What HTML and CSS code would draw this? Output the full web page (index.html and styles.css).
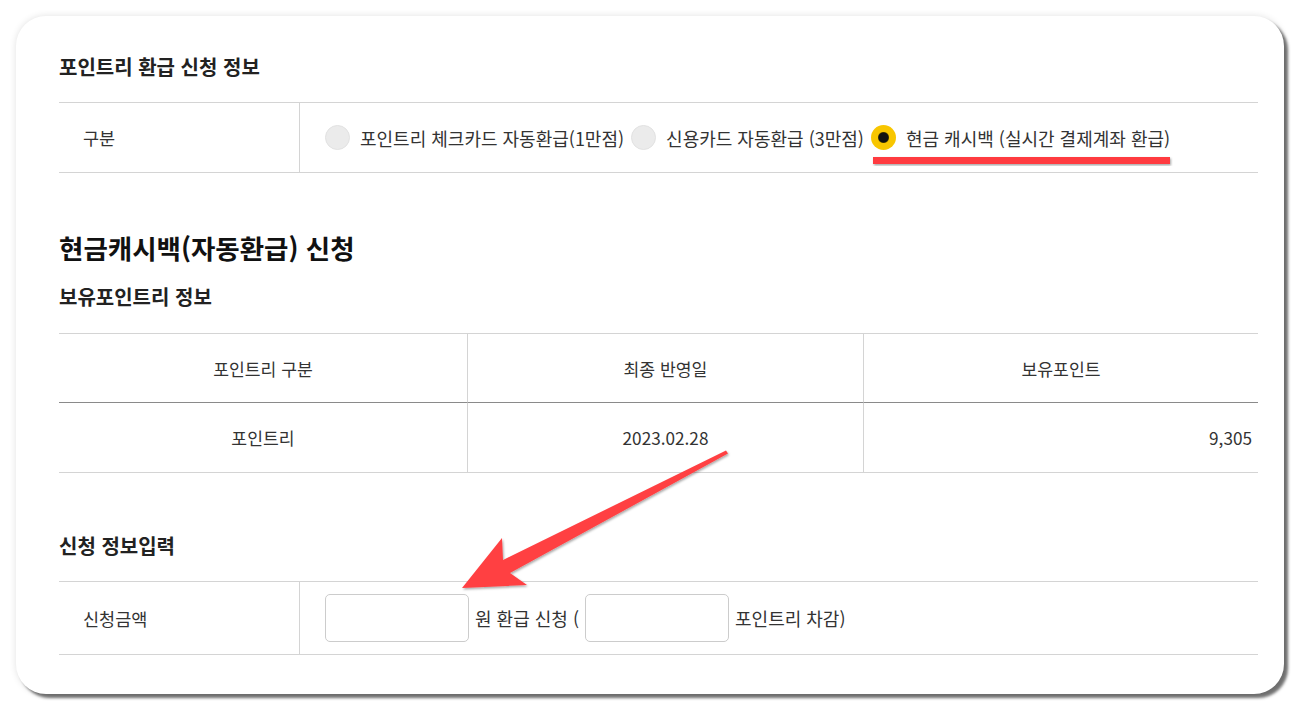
FILE: index.html
```html
<!DOCTYPE html>
<html lang="ko">
<head>
<meta charset="utf-8">
<title>포인트리 환급 신청</title>
<link rel="stylesheet" href="styles.css">
</head>
<body>
<div class="page">
  <section class="card">
    <h3 class="sub-title first">포인트리 환급 신청 정보</h3>
    <div class="form-table">
      <div class="form-row">
        <div class="label">구분</div>
        <div class="value options">
          <label class="opt"><span class="radio"></span><span class="opt-text">포인트리 체크카드 자동환급(1만점)</span></label>
          <label class="opt"><span class="radio"></span><span class="opt-text">신용카드 자동환급 (3만점)</span></label>
          <label class="opt"><span class="radio checked"></span><span class="opt-text">현금 캐시백 (실시간 결제계좌 환급)</span></label>
        </div>
      </div>
    </div>

    <h2 class="main-title">현금캐시백(자동환급) 신청</h2>
    <h3 class="sub-title sec">보유포인트리 정보</h3>
    <div class="data-table">
      <div class="th">포인트리 구분</div>
      <div class="th">최종 반영일</div>
      <div class="th">보유포인트</div>
      <div class="td">포인트리</div>
      <div class="td">2023.02.28</div>
      <div class="td right">9,305</div>
    </div>

    <h3 class="sub-title input-title">신청 정보입력</h3>
    <div class="form-table">
      <div class="form-row tall">
        <div class="label">신청금액</div>
        <div class="value inputs">
          <span class="box"></span>
          <span class="inline-text">원 환급 신청 (</span>
          <span class="box"></span>
          <span class="inline-text">포인트리 차감)</span>
        </div>
      </div>
    </div>
  </section>

  <svg class="annot" width="1308" height="718" viewBox="0 0 1308 718" aria-hidden="true">
    <defs>
      <filter id="sh" x="-10%" y="-10%" width="130%" height="130%">
        <feDropShadow dx="1" dy="1.5" stdDeviation="1" flood-color="#000" flood-opacity="0.35"/>
      </filter>
    </defs>
    <rect x="873" y="157" width="297" height="7" fill="#ff3b40" filter="url(#sh)"/>
    <polygon points="462,588 502,538 503,560 726,450.5 728,453.5 510,573 527,585" fill="#ff4043" filter="url(#sh)"/>
  </svg>
</div>
</body>
</html>
```
FILE: styles.css
```css
html, body {
  margin: 0;
  padding: 0;
  background: #ffffff;
}

body {
  font-family: "Noto Sans CJK KR", "Noto Sans", sans-serif;
  color: #333333;
}

.page {
  position: relative;
  width: 1308px;
  height: 718px;
  overflow: hidden;
}

.card {
  box-sizing: border-box;
  margin: 16px 0 0 16px;
  width: 1268px;
  height: 678px;
  padding: 36px 26px 0 43px;
  background: #ffffff;
  border-radius: 30px;
  box-shadow: 4px 4px 3px rgba(0, 0, 0, 0.55), 0 0 7px rgba(0, 0, 0, 0.12);
}

.sub-title {
  margin: 0;
  height: 30px;
  line-height: 30px;
  font-size: 20px;
  font-weight: 700;
  color: #222222;
}

.sub-title.first {
  margin-bottom: 20px;
}

.main-title {
  margin: 57px 0 0 0;
  height: 36px;
  line-height: 36px;
  font-size: 26.5px;
  font-weight: 700;
  color: #111111;
}

.sub-title.sec {
  margin-top: 16px;
  margin-bottom: 21px;
}

.sub-title.input-title {
  margin-top: 58px;
  margin-bottom: 20px;
}

.form-table {
  border-top: 1px solid #d4d4d4;
  border-bottom: 1px solid #d4d4d4;
}

.form-row {
  display: grid;
  grid-template-columns: 240px 1fr;
  height: 69px;
}

.form-row.tall {
  height: 72px;
}

.label {
  display: flex;
  align-items: center;
  padding-left: 24px;
  font-size: 17.5px;
  color: #333333;
}

.value {
  border-left: 1px solid #d4d4d4;
  display: flex;
  align-items: center;
  padding-left: 25px;
}

.options {
  gap: 7px;
}

.opt {
  display: flex;
  align-items: center;
  gap: 10px;
  font-size: 18px;
  color: #333333;
}

.radio {
  box-sizing: border-box;
  width: 25px;
  height: 25px;
  border-radius: 50%;
  background: #ebebeb;
  border: 1px solid #e2e2e2;
  flex: none;
}

.radio.checked {
  background: radial-gradient(circle, #111111 0 4.5px, #3a3000 5px, #f8c600 6px);
  border: none;
}

.data-table {
  display: grid;
  grid-template-columns: 408px 396px 1fr;
  border-top: 1px solid #d4d4d4;
  border-bottom: 1px solid #d4d4d4;
}

.th, .td {
  display: flex;
  align-items: center;
  justify-content: center;
  font-size: 17.2px;
  color: #333333;
}

.th {
  height: 68px;
  border-bottom: 1px solid #8a8a8a;
}

.td {
  height: 69px;
}

.th + .th, .td + .td {
  border-left: 1px solid #d4d4d4;
}

.td.right {
  justify-content: flex-end;
  padding-right: 6px;
}

.inputs {
  gap: 6px;
}

.box {
  box-sizing: border-box;
  width: 144px;
  height: 48px;
  border: 1px solid #cccccc;
  border-radius: 5px;
  background: #ffffff;
}

.inline-text {
  font-size: 18px;
  color: #333333;
}

.annot {
  position: absolute;
  left: 0;
  top: 0;
  pointer-events: none;
}
```
